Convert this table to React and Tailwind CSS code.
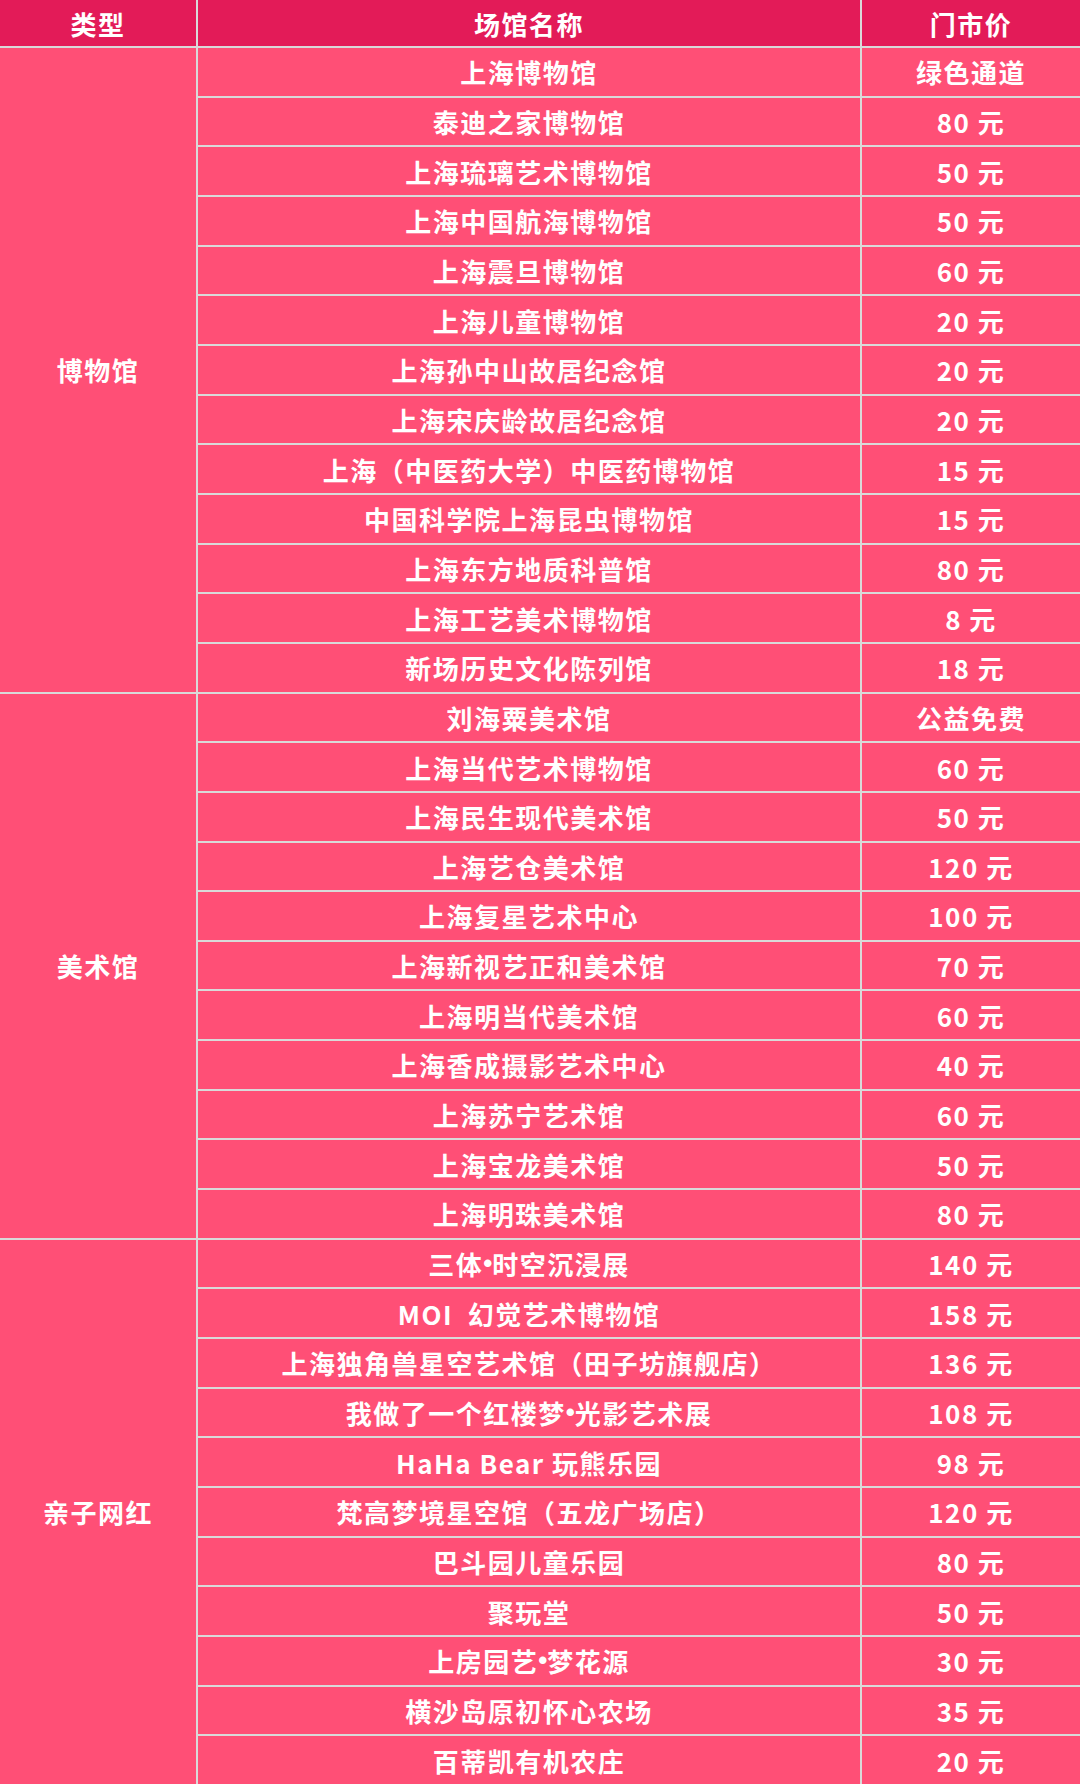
import React from "react";

const groups = [
  {
    type: "博物馆",
    rows: [
      ["上海博物馆", "绿色通道"],
      ["泰迪之家博物馆", "80 元"],
      ["上海琉璃艺术博物馆", "50 元"],
      ["上海中国航海博物馆", "50 元"],
      ["上海震旦博物馆", "60 元"],
      ["上海儿童博物馆", "20 元"],
      ["上海孙中山故居纪念馆", "20 元"],
      ["上海宋庆龄故居纪念馆", "20 元"],
      ["上海（中医药大学）中医药博物馆", "15 元"],
      ["中国科学院上海昆虫博物馆", "15 元"],
      ["上海东方地质科普馆", "80 元"],
      ["上海工艺美术博物馆", "8 元"],
      ["新场历史文化陈列馆", "18 元"],
    ],
  },
  {
    type: "美术馆",
    rows: [
      ["刘海粟美术馆", "公益免费"],
      ["上海当代艺术博物馆", "60 元"],
      ["上海民生现代美术馆", "50 元"],
      ["上海艺仓美术馆", "120 元"],
      ["上海复星艺术中心", "100 元"],
      ["上海新视艺正和美术馆", "70 元"],
      ["上海明当代美术馆", "60 元"],
      ["上海香成摄影艺术中心", "40 元"],
      ["上海苏宁艺术馆", "60 元"],
      ["上海宝龙美术馆", "50 元"],
      ["上海明珠美术馆", "80 元"],
    ],
  },
  {
    type: "亲子网红",
    rows: [
      ["三体•时空沉浸展", "140 元"],
      ["MOI  幻觉艺术博物馆", "158 元"],
      ["上海独角兽星空艺术馆（田子坊旗舰店）", "136 元"],
      ["我做了一个红楼梦•光影艺术展", "108 元"],
      ["HaHa Bear 玩熊乐园", "98 元"],
      ["梵高梦境星空馆（五龙广场店）", "120 元"],
      ["巴斗园儿童乐园", "80 元"],
      ["聚玩堂", "50 元"],
      ["上房园艺•梦花源", "30 元"],
      ["横沙岛原初怀心农场", "35 元"],
      ["百蒂凯有机农庄", "20 元"],
    ],
  },
];

const cell =
  "flex items-center justify-center text-white font-bold text-[26px] tracking-[1.5px] whitespace-pre";

// the bullet in the picture is the narrow latin one, not the full-width CJK glyph
function Name({ text }) {
  const parts = text.split("•");
  return parts.map((p, i) => (
    <React.Fragment key={i}>
      {i > 0 && (
        <span className="tracking-normal" style={{ fontFamily: '"Liberation Sans", sans-serif' }}>
          •
        </span>
      )}
      {p}
    </React.Fragment>
  ));
}

export default function App() {
  return (
    <div
      className="w-[1080px] h-[1784px] grid grid-cols-[196px_662px_1fr] grid-rows-[46px_repeat(35,minmax(0,1fr))] gap-[2px] bg-[#d9d9d9]"
      style={{ fontFamily: '"Noto Sans CJK SC", "Noto Sans", sans-serif' }}
    >
      <div className={`${cell} bg-[#e31b58] text-[24px]`}>类型</div>
      <div className={`${cell} bg-[#e31b58] text-[24px]`}>场馆名称</div>
      <div className={`${cell} bg-[#e31b58] text-[24px]`}>门市价</div>
      {groups.map((g) => (
        <React.Fragment key={g.type}>
          <div
            className={`${cell} bg-[#ff4f76] ${
              g.rows.length === 13 ? "row-span-13" : "row-span-11"
            }`}
          >
            {g.type}
          </div>
          {g.rows.map(([name, price], i) => (
            <React.Fragment key={g.type + i}>
              <div className={`${cell} bg-[#ff4f76] col-start-2`}>
                <Name text={name} />
              </div>
              <div className={`${cell} bg-[#ff4f76]`}>{price}</div>
            </React.Fragment>
          ))}
        </React.Fragment>
      ))}
    </div>
  );
}
